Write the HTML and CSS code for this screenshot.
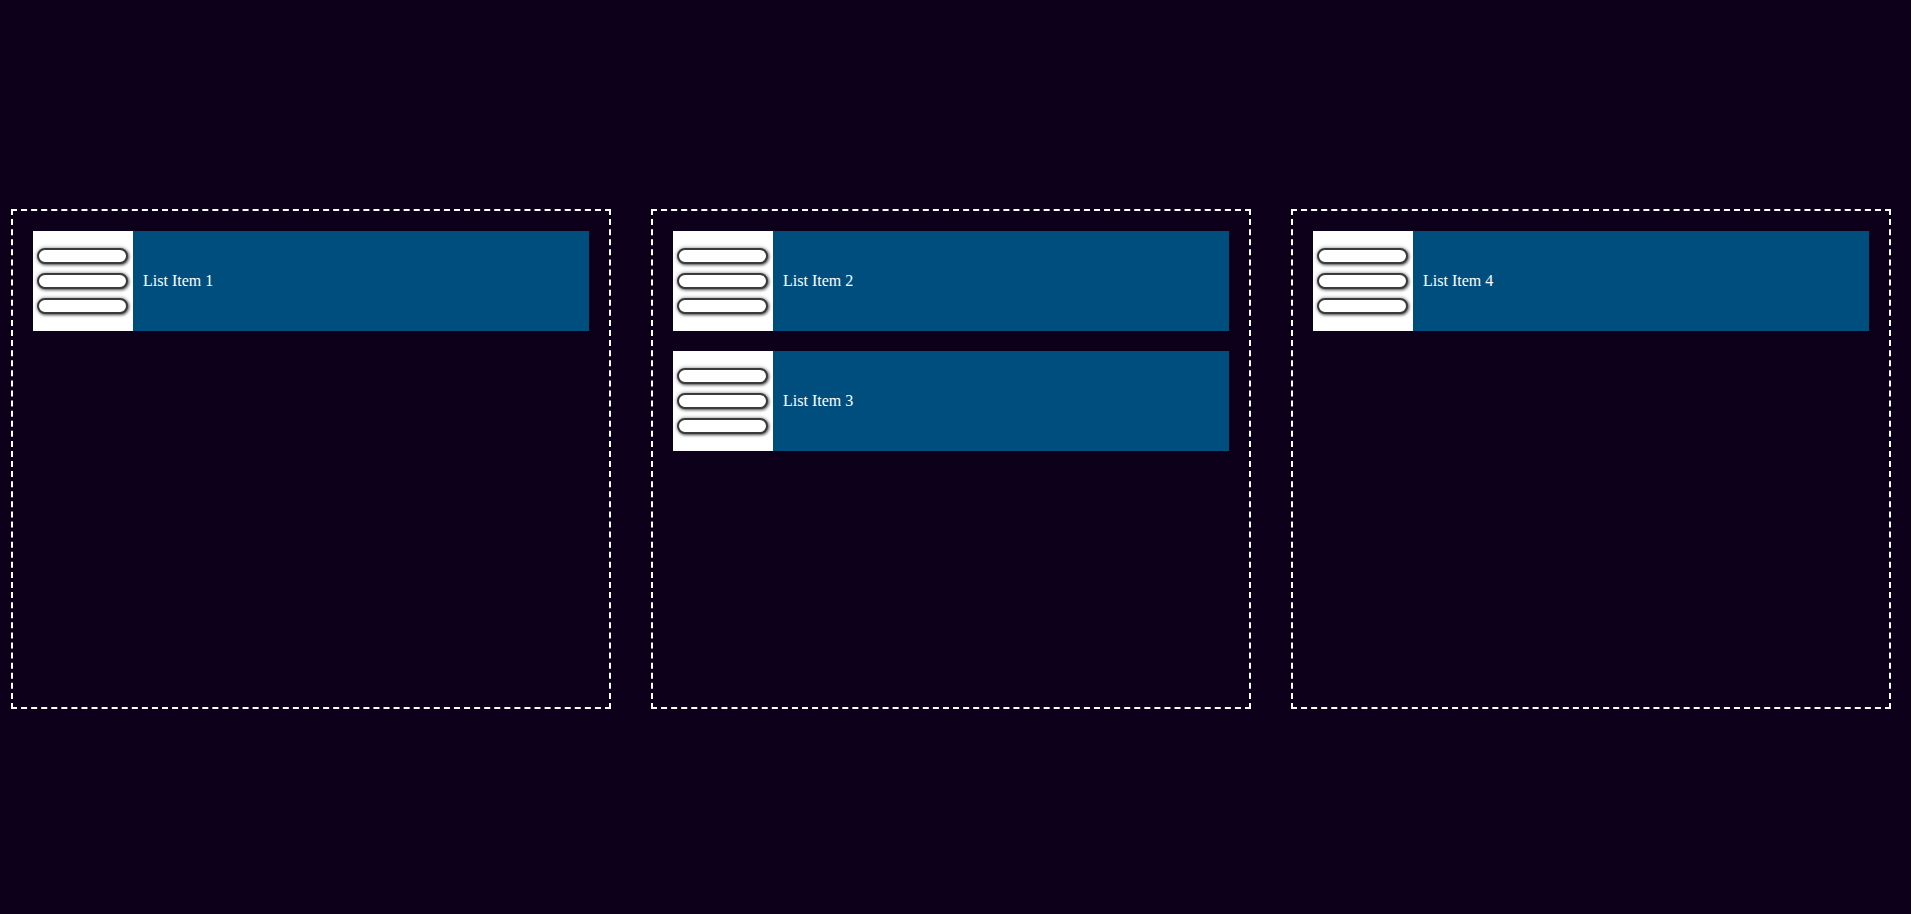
FILE: index.html
```html
<!DOCTYPE html>
<html lang="en">
<head>
    <meta charset="UTF-8">
    <meta name="viewport" content="width=device-width, initial-scale=1.0">
    <title>Sortable lists</title>
    <link rel="stylesheet" href="styles.css">
</head>
<body>
    <div class="board">
        <!-- Prvi seznam -->
        <div class="list">
            <div class="list-item">
                <div class="handle"><span></span><span></span><span></span></div>
                <div class="label">List Item 1</div>
            </div>
        </div>

        <!-- Drugi seznam -->
        <div class="list">
            <div class="list-item">
                <div class="handle"><span></span><span></span><span></span></div>
                <div class="label">List Item 2</div>
            </div>
            <div class="list-item">
                <div class="handle"><span></span><span></span><span></span></div>
                <div class="label">List Item 3</div>
            </div>
        </div>

        <!-- Tretji seznam -->
        <div class="list">
            <div class="list-item">
                <div class="handle"><span></span><span></span><span></span></div>
                <div class="label">List Item 4</div>
            </div>
        </div>
    </div>
</body>
</html>
```

FILE: styles.css
```css
body {
    margin: 0;
    padding: 0;
    background-color: #0c001a;
    font-family: 'Liberation Serif', 'Times New Roman', serif;
}

.board {
    display: flex;
    gap: 40px;
    padding: 209px 0 0 11px;
    height: 100vh;
    box-sizing: border-box;
}

.list {
    width: 600px;
    height: 500px;
    box-sizing: border-box;
    border: 2px dashed #ffffff;
    padding: 20px;
    display: flex;
    flex-direction: column;
    gap: 20px;
}

.list-item {
    display: flex;
    height: 100px;
    background-color: #004e7e;
}

/* Ročaj za vlečenje */
.handle {
    width: 100px;
    background-color: #ffffff;
    display: flex;
    flex-direction: column;
    justify-content: center;
    gap: 9px;
    padding-left: 4px;
    box-sizing: border-box;
}

.handle span {
    display: block;
    width: 91px;
    height: 16px;
    box-sizing: border-box;
    background-color: #ffffff;
    border: 2px solid #3a3a3a;
    border-radius: 8px;
    box-shadow: 1px 1px 3px rgba(0, 0, 0, 0.6), 0 0 4px rgba(0, 0, 0, 0.35);
}

.label {
    display: flex;
    align-items: center;
    padding-left: 10px;
    color: #ffffff;
    font-size: 16px;
}
```
